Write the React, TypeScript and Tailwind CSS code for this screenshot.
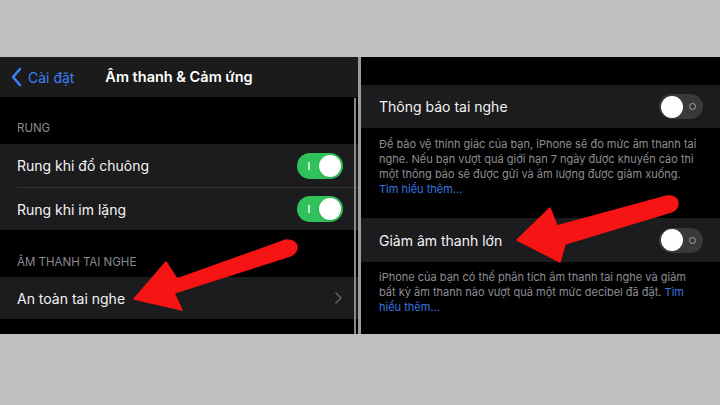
import React from "react";

const FONT = { fontFamily: "Inter, 'Noto Sans', 'Liberation Sans', sans-serif" };

function ToggleOn() {
  return (
    <div className="relative w-[46px] h-[26px] rounded-full bg-[#30c15a] flex items-center justify-end pr-[2px]">
      <div className="absolute left-[11px] top-[9px] w-[1.5px] h-[8px] bg-[#e8ffe8] opacity-80" />
      <div className="w-[22px] h-[22px] rounded-full bg-white shadow" />
    </div>
  );
}

function ToggleOff() {
  return (
    <div className="relative w-[44px] h-[25px] rounded-full bg-[#39393b] flex items-center pl-[2px]">
      <div className="w-[22px] h-[22px] rounded-full bg-white" />
      <div className="absolute right-[7px] top-[9px] w-[7px] h-[7px] rounded-full border-[1.5px] border-[#a5a5a8]" />
    </div>
  );
}

export default function App() {
  return (
    <div className="relative w-[720px] h-[405px] bg-[#bfbfbf] overflow-hidden" style={FONT}>
      <div className="h-[57px]" />
      <div className="flex h-[277px]">
        {/* Left panel */}
        <div className="relative w-[358px] shrink-0 bg-black flex flex-col">
          <div className="h-[40px] bg-[#1b1b1c] grid grid-cols-[1fr_auto_1fr] items-center">
            <div className="flex items-center pl-[11px] text-[#3a82f7] text-[14px]">
              <svg width="11" height="20" viewBox="0 0 11 20" className="mr-[6px]">
                <path d="M9 2 L2 10 L9 18" fill="none" stroke="#3a82f7" strokeWidth="2.6" strokeLinecap="round" strokeLinejoin="round" />
              </svg>
              <span>Cài đặt</span>
            </div>
            <div className="text-white text-[14.5px] font-semibold">Âm thanh &amp; Cảm ứng</div>
            <div />
          </div>
          <div className="h-[47px] flex items-end pb-[7px] px-[17px] text-[11.5px] text-[#8b8b90]">RUNG</div>
          <div className="h-[43px] bg-[#1c1c1e] flex items-center justify-between pl-[17px] pr-[15px] text-[14px] text-[#f4f4f4]">
            <span>Rung khi đổ chuông</span>
            <ToggleOn />
          </div>
          <div className="h-px bg-[#1c1c1e] pl-[17px]"><div className="h-px bg-[#333335]" /></div>
          <div className="h-[42px] bg-[#1c1c1e] flex items-center justify-between pl-[17px] pr-[15px] text-[14px] text-[#f4f4f4]">
            <span>Rung khi im lặng</span>
            <ToggleOn />
          </div>
          <div className="h-[47px] flex items-end pb-[6px] px-[17px] text-[11.5px] text-[#8b8b90]">ÂM THANH TAI NGHE</div>
          <div className="h-[42px] bg-[#1c1c1e] flex items-center justify-between pl-[17px] pr-[16px] text-[14px] text-[#f4f4f4]">
            <span>An toàn tai nghe</span>
            <svg width="7" height="12" viewBox="0 0 7 12">
              <path d="M1 1 L6 6 L1 11" fill="none" stroke="#5f5f63" strokeWidth="1.6" strokeLinecap="round" strokeLinejoin="round" />
            </svg>
          </div>
          <div className="flex-1" />
          <div className="absolute right-[2px] top-[41px] bottom-0 w-[2px] bg-[#8a8a8a]" />
        </div>
        <div className="w-[3px] shrink-0 bg-[#9c9c9c]" />
        {/* Right panel */}
        <div className="flex-1 min-w-0 overflow-hidden bg-black flex flex-col">
          <div className="h-[28px]" />
          <div className="h-[43px] bg-[#1c1c1e] flex items-center justify-between pl-[18px] pr-[17px] text-[14px] text-[#f4f4f4]">
            <span>Thông báo tai nghe</span>
            <ToggleOff />
          </div>
          <div className="h-[90px] pt-[9px] px-[18px] text-[11px] leading-[15px] text-[#8e8e93] whitespace-nowrap">
            <div>Để bảo vệ thính giác của bạn, iPhone sẽ đo mức âm thanh tai</div>
            <div>nghe. Nếu bạn vượt quá giới hạn 7 ngày được khuyến cáo thì</div>
            <div>một thông báo sẽ được gửi và âm lượng được giảm xuống.</div>
            <div className="text-[#3a74e0]">Tìm hiểu thêm...</div>
          </div>
          <div className="h-[44px] bg-[#1c1c1e] flex items-center justify-between pl-[18px] pr-[17px] text-[14px] text-[#f4f4f4]">
            <span>Giảm âm thanh lớn</span>
            <ToggleOff />
          </div>
          <div className="flex-1 pt-[8px] px-[18px] text-[11px] leading-[15px] text-[#8e8e93] whitespace-nowrap">
            <div>iPhone của bạn có thể phân tích âm thanh tai nghe và giảm</div>
            <div>bất kỳ âm thanh nào vượt quá một mức decibel đã đặt. <span className="text-[#3a74e0]">Tìm</span></div>
            <div className="text-[#3a74e0]">hiểu thêm...</div>
          </div>
        </div>
      </div>
      <svg className="absolute inset-0 pointer-events-none" width="720" height="405" viewBox="0 0 720 405">
        <path
          d="M134 299 L166 262 L177 279 L286 240 Q296 240 297 247 Q297 253 290 256 L174 293 L182 310 Z"
          fill="#f71414"
          stroke="#f71414"
          strokeWidth="1.5"
          strokeLinejoin="round"
        />
        <path
          d="M517 240 L550 208 L557 226 L667 196 Q677 195 678 203 Q678 210 671 212 L565 244 L560 262 Z"
          fill="#f71414"
          stroke="#f71414"
          strokeWidth="1.5"
          strokeLinejoin="round"
        />
      </svg>
    </div>
  );
}
